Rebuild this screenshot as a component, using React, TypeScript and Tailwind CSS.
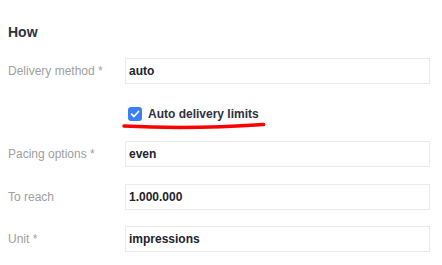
export default function App() {
  const rows = [
    { label: 'Pacing options *', value: 'even', mt: 'mt-[14px]' },
    { label: 'To reach', value: '1.000.000', mt: 'mt-[17px]' },
    { label: 'Unit *', value: 'impressions', mt: 'mt-[16px]' },
  ];

  return (
    <div className="relative w-[442px] h-[265px] bg-white pl-2 pr-3 pt-[22px] font-['Liberation_Sans',Arial,sans-serif] overflow-hidden">
      <h2 className="text-[14px] leading-5 font-bold text-[#2e3140]">How</h2>

      <div className="mt-[16px] flex items-center">
        <div className="w-[117px] text-[12px] text-[#a0a0a0]">Delivery method *</div>
        <div className="flex-1 h-[26px] border border-[#ebebeb] px-[3px] flex items-center text-[12px] font-bold text-[#22242c]">
          auto
        </div>
      </div>

      <div className="mt-[17px] h-[26px] flex items-center pl-[120px]">
        <span className="w-[14px] h-[14px] rounded-[3px] bg-[#3a7ff6] flex items-center justify-center">
          <svg width="10" height="10" viewBox="0 0 10 10" fill="none">
            <path d="M1.6 5.2 L4 7.5 L8.5 2.5" stroke="white" strokeWidth="1.8" strokeLinecap="round" strokeLinejoin="round" />
          </svg>
        </span>
        <span className="ml-[6px] text-[12px] font-bold text-[#2e3140]">Auto delivery limits</span>
      </div>

      {rows.map((r) => (
        <div key={r.label} className={`${r.mt} flex items-center`}>
          <div className="w-[117px] text-[12px] text-[#a0a0a0]">{r.label}</div>
          <div className="flex-1 h-[26px] border border-[#ebebeb] px-[3px] flex items-center text-[12px] font-bold text-[#22242c]">
            {r.value}
          </div>
        </div>
      ))}

      <svg className="absolute left-0 top-0 pointer-events-none" width="442" height="265">
        <path d="M124 126 Q 190 129.5 263.5 124.5" stroke="#ff0000" strokeWidth="3.6" strokeLinecap="round" fill="none" />
      </svg>
    </div>
  );
}
